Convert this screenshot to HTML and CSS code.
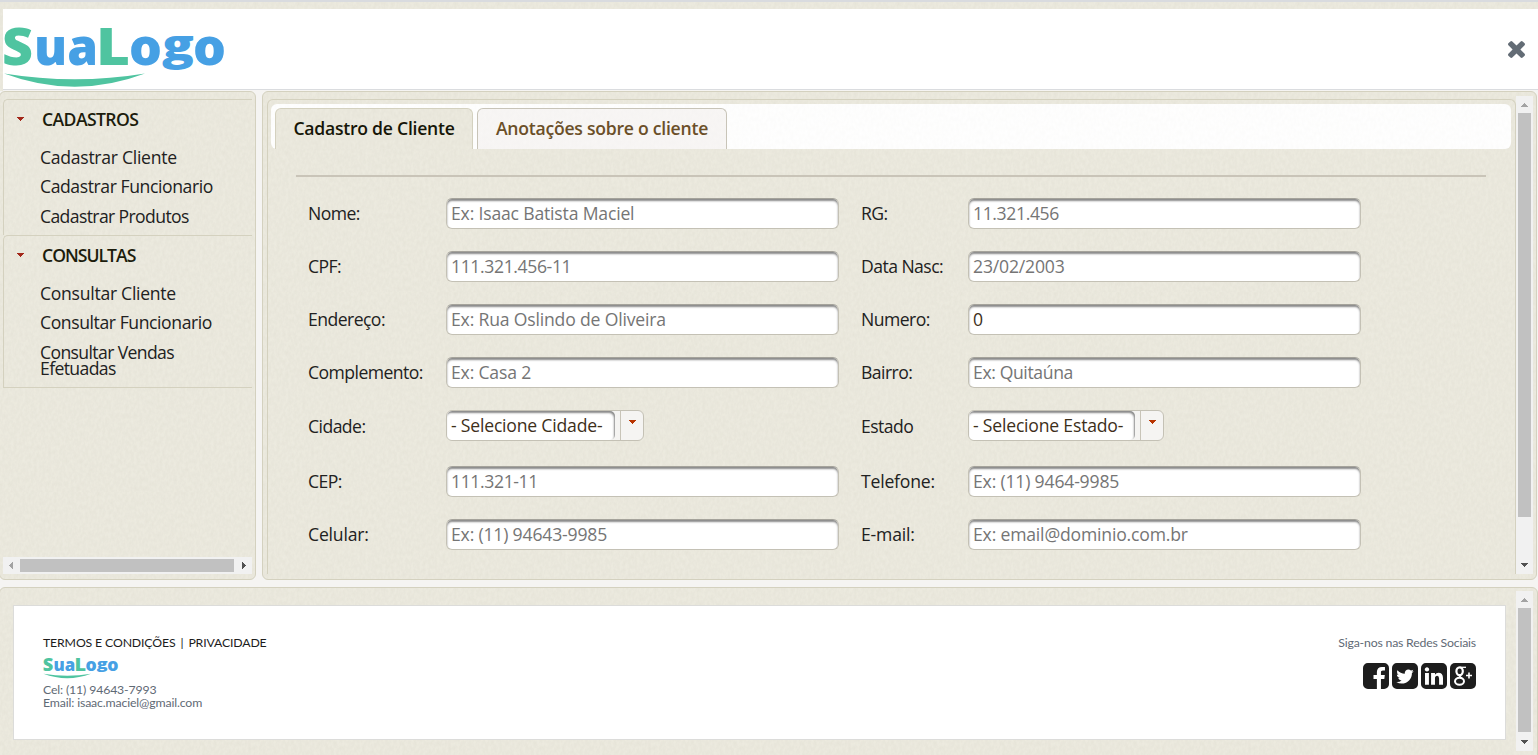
FILE: index.html
```html
<!DOCTYPE html>
<html lang="pt-BR">
<head>
<meta charset="utf-8">
<title>Cadastro de Cliente</title>
<link rel="stylesheet" href="styles.css">
</head>
<body>
<svg class="defs" width="0" height="0">
  <symbol id="logo" viewBox="0 0 222 62" overflow="visible">
    <g font-family="Open Sans, sans-serif" font-weight="800" font-size="52">
      <text x="-1" y="38" fill="#4fc4a0" textLength="31" lengthAdjust="spacingAndGlyphs">S</text>
      <text x="31" y="38" fill="#46a0e4" textLength="64" lengthAdjust="spacingAndGlyphs">ua</text>
      <text x="93" y="38" fill="#4fc4a0" textLength="34" lengthAdjust="spacingAndGlyphs">L</text>
      <text x="126" y="38" fill="#46a0e4" textLength="33" lengthAdjust="spacingAndGlyphs">o</text>
      <text x="159" y="38" fill="#46a0e4" textLength="32" lengthAdjust="spacingAndGlyphs" transform="translate(0 1.5) scale(1 .83)">g</text>
      <text x="190" y="38" fill="#46a0e4" textLength="33" lengthAdjust="spacingAndGlyphs">o</text>
    </g>
    <path d="M1 46.500Q72 58 142 46.500Q72 73 1 46.500Z" fill="#4fc4a0"/>
  </symbol>
  <symbol id="up" viewBox="0 0 7 4"><path d="M3 0h1v1h1v1h1v1h1v1H0V3h1V2h1V1h1z"/></symbol>
  <symbol id="down" viewBox="0 0 7 4"><path d="M0 0h7v1H6v1H5v1H4v1H3V3H2V2H1V1H0z"/></symbol>
</svg>

<header class="top">
  <div class="top-inner">
    <svg class="logo"><use href="#logo"/></svg>
    <svg class="close" viewBox="302 366 1188 1188"><path d="M1490 1322q0 40-28 68l-136 136q-28 28-68 28t-68-28l-294-294-294 294q-28 28-68 28t-68-28l-136-136q-28-28-28-68t28-68l294-294-294-294q-28-28-28-68t28-68l136-136q28-28 68-28t68 28l294 294 294-294q28-28 68-28t68 28l136 136q28 28 28 68t-28 68l-294 294 294 294q28 28 28 68z"/></svg>
  </div>
</header>

<main class="middle">
  <aside class="panel side">
    <nav class="menu">
      <section class="group">
        <h3><svg class="caret"><use href="#down"/></svg>CADASTROS</h3>
        <a class="loose">Cadastrar Cliente</a>
        <a>Cadastrar Funcionario</a>
        <a class="tight">Cadastrar Produtos</a>
      </section>
      <section class="group last">
        <h3 class="tight"><svg class="caret"><use href="#down"/></svg>CONSULTAS</h3>
        <a class="loose">Consultar Cliente</a>
        <a>Consultar Funcionario</a>
        <a class="tight">Consultar Vendas<br>Efetuadas</a>
      </section>
    </nav>
    <div class="hbar">
      <svg class="arrow off" viewBox="0 0 4 7"><path d="M4 0v7H3V6H2V5H1V4H0V3h1V2h1V1h1V0z"/></svg>
      <div class="hthumb"></div>
      <svg class="arrow" viewBox="0 0 4 7"><path d="M0 0v7h1V6h1V5h1V4h1V3H3V2H2V1H1V0z"/></svg>
    </div>
  </aside>

  <section class="panel content">
    <div class="tabview">
      <div class="tabs">
        <div class="tab active">Cadastro de Cliente</div>
        <div class="tab">Anotações sobre o cliente</div>
      </div>
      <hr class="rule">
      <form class="form">
        <label>Nome:</label><input placeholder="Ex: Isaac Batista Maciel">
        <label>RG:</label><input class="num" placeholder="11.321.456">
        <label>CPF:</label><input class="num" placeholder="111.321.456-11">
        <label>Data Nasc:</label><input placeholder="23/02/2003">
        <label>Endereço:</label><input placeholder="Ex: Rua Oslindo de Oliveira">
        <label>Numero:</label><input value="0">
        <label>Complemento:</label><input placeholder="Ex: Casa 2">
        <label>Bairro:</label><input class="num" placeholder="Ex: Quitaúna">
        <label class="low">Cidade:</label>
        <div class="select city"><span>- Selecione Cidade-</span><i><svg><use href="#down"/></svg></i></div>
        <label class="low">Estado</label>
        <div class="select state"><span>- Selecione Estado-</span><i><svg><use href="#down"/></svg></i></div>
        <label>CEP:</label><input class="num" placeholder="111.321-11">
        <label class="wide">Telefone:</label><input placeholder="Ex: (11) 9464-9985">
        <label class="wide">Celular:</label><input placeholder="Ex: (11) 94643-9985">
        <label class="wide">E-mail:</label><input placeholder="Ex: email@dominio.com.br">
      </form>
    </div>
    <div class="vbar">
      <svg class="varrow off"><use href="#up"/></svg>
      <div class="vthumb"></div>
      <svg class="varrow"><use href="#down"/></svg>
    </div>
  </section>
</main>

<footer class="panel foot">
  <div class="card">
    <div class="info">
      <p class="links"><a>TERMOS E CONDIÇÕES</a><span>|</span><a>PRIVACIDADE</a></p>
      <svg class="mini"><use href="#logo"/></svg>
      <p>Cel: (11) 94643-7993</p>
      <p class="mail">Email: isaac.maciel@gmail.com</p>
    </div>
    <div class="social">
      <p>Siga-nos nas Redes Sociais</p>
      <div class="icons">
        <svg viewBox="128 128 1536 1536"><path d="M1376 128q119 0 203.500 84.500t84.500 203.500v960q0 119-84.500 203.500t-203.500 84.500h-188v-595h199l30-232h-229v-148q0-56 23.500-84t91.500-28l122-1v-207q-63-9-178-9-136 0-217.500 80t-81.500 226v171h-200v232h200v595h-532q-119 0-203.500-84.500t-84.500-203.500v-960q0-119 84.500-203.500t203.500-84.500h960z"/></svg>
        <svg viewBox="128 128 1536 1536"><path d="M1408 610q-56 25-121 34 68-40 93-117-65 38-134 51-61-66-153-66-87 0-148.500 61.500t-61.500 148.500q0 29 5 48-129-7-242-65t-192-155q-29 50-29 106 0 114 91 175-47-1-100-26v2q0 75 50 133.500t123 72.500q-29 8-51 8-13 0-39-4 21 63 74.500 104t121.500 42q-116 90-261 90-26 0-50-3 148 94 322 94 112 0 210-35.500t168-95 120.500-137 75-162 24.500-168.500q0-18-1-27 63-45 105-109zm256-194v960q0 119-84.500 203.500t-203.500 84.500h-960q-119 0-203.500-84.500t-84.500-203.500v-960q0-119 84.500-203.500t203.500-84.500h960q119 0 203.500 84.500t84.500 203.500z"/></svg>
        <svg viewBox="128 128 1536 1536"><path d="M365 1414h231v-694h-231v694zm246-908q-1-52-36-86t-93-34-94.500 34-36.500 86q0 51 35.500 85.500t92.500 34.500h1q59 0 95-34.500t36-85.500zm585 908h231v-398q0-154-73-233t-193-79q-136 0-209 117h2v-101h-231q3 66 0 694h231v-388q0-38 7-56 15-35 45-59.500t74-24.500q116 0 116 157v371zm468-998v960q0 119-84.500 203.500t-203.500 84.500h-960q-119 0-203.500-84.500t-84.500-203.500v-960q0-119 84.500-203.500t203.500-84.500h960q119 0 203.500 84.500t84.500 203.500z"/></svg>
        <svg viewBox="0 0 26 26"><rect width="26" height="26" rx="5"/><g fill="none" stroke="#fff"><ellipse cx="9.600" cy="8.200" rx="3.200" ry="3.900" stroke-width="2.200"/><path d="M10 4.300h6" stroke-width="1.300"/><path d="M10.300 12c-1.400 1.500 0 2.300 1.500 3.300" stroke-width="2"/><ellipse cx="9.500" cy="18.300" rx="4.500" ry="3.500" stroke-width="2"/><path d="M19 9.500v6M16 12.500h6" stroke-width="1.600"/></g></svg>
      </div>
    </div>
  </div>
  <div class="vbar">
    <svg class="varrow off"><use href="#up"/></svg>
    <div class="vthumb"></div>
    <svg class="varrow"><use href="#down"/></svg>
  </div>
</footer>
</body>
</html>
```
FILE: styles.css
```css
* { box-sizing: border-box; }
:root {
  --grain: url("data:image/svg+xml,%3Csvg xmlns='http://www.w3.org/2000/svg' width='200' height='200'%3E%3Cfilter id='n'%3E%3CfeTurbulence type='fractalNoise' baseFrequency='.35 .22' numOctaves='2' stitchTiles='stitch'/%3E%3CfeColorMatrix values='0 0 0 0 .45 0 0 0 0 .43 0 0 0 0 .35 .16 0 0 0 -.02'/%3E%3C/filter%3E%3Crect width='200' height='200' filter='url(%23n)'/%3E%3C/svg%3E");
  --line: #d4d1bf;
}
body {
  margin: 0;
  height: 755px;
  overflow: hidden;
  background: #f5f4f2;
  font: 17.6px/20px "Open Sans", sans-serif;
  color: #212121;
  display: flex;
  flex-direction: column;
}
p, h3, hr { margin: 0; }
.defs { position: absolute; }
symbol { overflow: visible; }

.top {
  height: 91px;
  flex: none;
  padding: 7px 0 0 3px;
  border-top: 2px solid #d9dbdf;
  background: var(--grain) 0 0 / 200px 200px, #edebe0;
}
.top-inner {
  height: 82px;
  background: #fff;
  border-bottom: 1px solid #dadcdf;
  box-shadow: 0 1px #f5f4f2;
  display: flex;
  justify-content: space-between;
  padding: 18px 13px 0 0;
}
.top-inner { height: 81px; }
.logo { width: 222px; height: 62px; overflow: visible; }
.close { width: 17px; height: 17px; margin-top: 14px; fill: #636c75; }

.panel {
  border: 1px solid var(--line);
  border-radius: 6px;
  background: var(--grain), #edebe0;
}
.middle { display: flex; gap: 6px; height: 489px; flex: none; margin-left: -1px; }
.side {
  width: 257px;
  padding: 7px 3px 5px;
  display: flex;
  flex-direction: column;
  justify-content: space-between;
}
.menu { border-bottom: 1px solid var(--line); }
.group {
  height: 136px;
  border: solid var(--line);
  border-width: 1px 0 0 1px;
  border-radius: 5px 0 0 0;
}
.group.last { height: 152px; }
.group h3 {
  height: 39px;
  margin-bottom: 3px;
  padding: 0 0 2px 13px;
  display: flex;
  align-items: center;
  font-size: 17.6px;
  font-weight: 600;
  color: #1c1c0c;
  letter-spacing: -0.6px;
}
.group h3.tight { letter-spacing: -1px; }
.caret { width: 7px; height: 4px; margin: 1px 18px 0 0; fill: #a3281a; }
.group a {
  display: block;
  padding: 6.75px 0 6.75px 36px;
  line-height: 16px;
  letter-spacing: -0.42px;
}
.group a.loose { letter-spacing: -0.28px; }
.group a.tight { letter-spacing: -0.62px; }
.hbar {
  height: 17px;
  background: #f1f1f1;
  display: flex;
  align-items: center;
  padding: 0 0 0 6px;
}
.hthumb { width: 214px; height: 13px; margin: 0 8px 0 7px; background: #c1c1c1; }
.arrow { width: 4px; height: 7px; fill: #505050; }
.off { fill: #a3a3a3; }

.content { width: 1275px; display: flex; padding: 4px 3px 5px 4px; }
.tabview {
  width: 1249px;
  height: 475px;
  margin-top: 3px;
  padding: 4px 4px 0 3px;
  border: solid var(--line);
  border-width: 1px 1px 0;
  border-radius: 6px 6px 0 0;
}
.tabs {
  height: 45px;
  display: flex;
  gap: 4px;
  padding: 4px 4px 0;
  border-radius: 6px;
  background: linear-gradient(#ffffffa0, #ffffffa0), var(--grain), #fff;
}
.tab {
  height: 41px;
  width: 250px;
  border: 1px solid #c8c4b8;
  border-bottom: 0;
  border-radius: 6px 6px 0 0;
  background: linear-gradient(#f7f5f4b0, #f7f5f4b0), var(--grain), #fbf9f8;
  color: #6b4f28;
  font-weight: 600;
  line-height: 39px;
  letter-spacing: -0.25px;
  text-align: center;
  white-space: nowrap;
}
.tab.active { width: 198px; border-color: var(--line); background: var(--grain), #edebe0; color: #161608; }
.rule { height: 2px; border: 0; background: #c9c4b8; margin: 26px 25px 21px 25px; }
.form {
  display: grid;
  grid-template-columns: 138px 415px 107px 393px;
  grid-template-rows: 53px 53px 53px 53px 56px 53px 31px;
  padding-left: 37px;
}
.form label { line-height: 30px; letter-spacing: -0.55px; white-space: nowrap; }
.form .wide { letter-spacing: -0.2px; }
.form .low { padding-top: 1px; }
.form input {
  width: 393px;
  height: 31px;
  padding: 0 4px 1px;
  font: inherit;
  letter-spacing: -0.18px;
  color: #3d2f1a;
  background: #fff;
  border: 1px solid #c4c1b5;
  border-top-color: #a5a39b;
  border-radius: 6px;
  box-shadow: inset 0 2px 2px #8a8a8a;
}
.form input.num { letter-spacing: -0.38px; }
.form input::placeholder { color: #757575; opacity: 1; }
.select {
  height: 31px;
  display: flex;
  border: 1px solid #c4c1b5;
  border-radius: 6px;
  background: #f5f4f2;
  overflow: hidden;
}
.city { width: 198px; }
.state { width: 196px; }
.select span {
  flex: 1;
  padding-left: 4px;
  line-height: 29px;
  letter-spacing: -0.2px;
  white-space: nowrap;
  color: #3d2f1a;
  background: #fff;
  border-radius: 5px;
  box-shadow: inset -1px 2px 2px #8a8a8a;
}
.select i {
  width: 23px;
  margin-left: 5px;
  border-left: 1px solid #c8c4b8;
  display: flex;
  justify-content: center;
}
.select svg { width: 7px; height: 4px; margin-top: 9px; fill: #b83400; }

.vbar {
  width: 17px;
  background: #f1f1f1;
  display: flex;
  flex-direction: column;
  align-items: center;
  padding: 7px 0 7px;
}
.vthumb { width: 13px; height: 404px; margin-top: 6px; background: #c1c1c1; }
.varrow { width: 7px; height: 4px; fill: #505050; flex: none; }
.varrow.off { fill: #a3a3a3; }
.varrow:last-child { margin-top: auto; }

.foot {
  height: 175px;
  flex: none;
  margin: 7px 0 0 -1px;
  width: 1539px;
  display: flex;
  justify-content: space-between;
  padding: 3px 4px 0 13px;
}
.card {
  width: 1493px;
  height: 135px;
  margin-top: 14px;
  padding: 29px 29px 0;
  background: #fff;
  border: 1px solid #dcdcda;
  display: flex;
  justify-content: space-between;
  font: 12.3px/13px Lato, sans-serif;
  letter-spacing: -0.15px;
  color: #5f6a75;
}
.foot .vbar { height: 160px; }
.foot .vthumb { height: 124px; }
.links { color: #1c1c1c; padding-top: 1px; height: 22px; display: flex; gap: 5px; }
.mini { display: block; width: 75px; height: 21px; margin: 1px 0 4px; overflow: visible; }
.social { text-align: right; padding-top: 1px; letter-spacing: -0.2px; }
.icons { display: flex; gap: 3px; justify-content: flex-end; margin-top: 14px; }
.icons svg { width: 26px; height: 26px; fill: #1d1d1d; }
```
